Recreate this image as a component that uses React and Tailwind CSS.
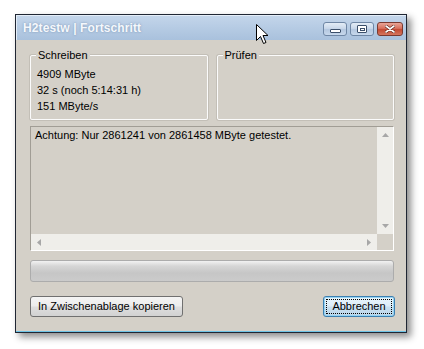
import React from 'react';

const font = { fontFamily: '"Liberation Sans", Arial, sans-serif' };

const TitleButton = ({ kind }) => {
  if (kind === 'close') {
    return (
      <div className="flex h-[14px] w-[26px] items-center justify-center rounded-[3px] border border-[#7a3a30] bg-[linear-gradient(#e9a597_0%,#d7705d_45%,#c34a33_55%,#d5765f_100%)]">
        <svg width="10" height="8" viewBox="0 0 10 8">
          <path d="M1 1 L9 7 M9 1 L1 7" stroke="#5b2218" strokeWidth="3" strokeLinecap="round" />
          <path d="M1 1 L9 7 M9 1 L1 7" stroke="#ffffff" strokeWidth="1.6" strokeLinecap="round" />
        </svg>
      </div>
    );
  }
  return (
    <div className="flex h-[14px] w-[24px] items-center justify-center rounded-[3px] border border-[#6f87a5] bg-[linear-gradient(#e3ecf6_0%,#c9d8ea_45%,#b4c8e0_55%,#c7d8ec_100%)]">
      {kind === 'min' ? (
        <div className="mt-[3px] h-[4px] w-[11px] rounded-[1px] border border-[#3b4f6a] bg-white" />
      ) : (
        <div className="flex h-[8px] w-[10px] items-center justify-center rounded-[1px] border border-[#3b4f6a] bg-white">
          <div className="h-[3px] w-[5px] border border-[#3b4f6a]" />
        </div>
      )}
    </div>
  );
};

const GroupBox = ({ label, children }) => (
  <div className="relative h-[65px] rounded-[2px] border border-[#fbfbfb] shadow-[0_0_0_1px_#c3bfb7]">
    <span className="absolute left-[5px] top-[-7px] bg-[#d4d0c8] px-[2px] leading-[13px]">{label}</span>
    <div className="pl-[6px] pt-[10px] leading-[16px]">{children}</div>
  </div>
);

const Arrow = ({ dir }) => {
  const d = {
    up: 'M0 4 L3.5 0 L7 4 Z',
    down: 'M0 0 L7 0 L3.5 4 Z',
    left: 'M4 0 L4 7 L0 3.5 Z',
    right: 'M0 0 L4 3.5 L0 7 Z',
  }[dir];
  const vertical = dir === 'up' || dir === 'down';
  return (
    <svg width={vertical ? 7 : 4} height={vertical ? 4 : 7} viewBox={vertical ? '0 0 7 4' : '0 0 4 7'}>
      <path d={d} fill="#a7a7a7" />
    </svg>
  );
};

export default function App() {
  return (
    <div className="relative h-[349px] w-[424px] overflow-hidden bg-white pl-[15px] pt-[14px] text-[11px] text-black" style={font}>
      <div className="flex h-[319px] w-[392px] flex-col border border-[#1f2633] bg-[#d4d0c8] shadow-[4px_4px_7px_rgba(0,0,0,0.45)]">
        {/* title bar */}
        <div className="flex h-[25px] shrink-0 items-center justify-between border-t border-l border-[#e4edf7] bg-[linear-gradient(#c3d5ea_0%,#b3c9e2_60%,#a9c1dd_100%)] pl-[6px] pr-[3px]">
          <span className="text-[12px] font-bold tracking-[0.1px] text-[#f5f8fc] [text-shadow:0_0_2px_rgba(60,90,130,0.5)]">
            H2testw | Fortschritt
          </span>
          <div className="flex items-center gap-[3px] pt-[2px]">
            <TitleButton kind="min" />
            <TitleButton kind="max" />
            <TitleButton kind="close" />
          </div>
        </div>

        {/* client area */}
        <div className="flex flex-1 flex-col border-b border-[#6ec4e6] pl-[14px] pr-[12px] pt-[15px]">
          <div className="grid grid-cols-2 gap-[9px]">
            <GroupBox label="Schreiben">
              <div>4909 MByte</div>
              <div>32 s (noch 5:14:31 h)</div>
              <div>151 MByte/s</div>
            </GroupBox>
            <GroupBox label="Prüfen" />
          </div>

          <div className="mt-[6px] grid h-[125px] grid-cols-[1fr_16px] grid-rows-[1fr_16px] border border-t-[#a19d95] border-l-[#a19d95] border-b-white border-r-white">
            <div className="pl-[4px] pt-[2px] leading-[13px]">Achtung: Nur 2861241 von 2861458 MByte getestet.</div>
            <div className="flex flex-col items-center justify-between bg-[#efeeea] py-[6px]">
              <Arrow dir="up" />
              <Arrow dir="down" />
            </div>
            <div className="flex items-center justify-between bg-[#efeeea] px-[6px]">
              <Arrow dir="left" />
              <Arrow dir="right" />
            </div>
            <div className="bg-[#d4d0c8]" />
          </div>

          <div className="mt-[9px] h-[22px] rounded-[3px] border border-[#acacac] bg-[linear-gradient(#f2f2f2_0%,#d6d6d6_25%,#c6c6c6_60%,#cbcbcb_100%)]" />

          <div className="mt-[14px] flex items-center justify-between">
            <button className="h-[21px] w-[153px] rounded-[3px] border border-[#707070] bg-[linear-gradient(#f4f4f4_0%,#ececec_48%,#dedede_52%,#d2d2d2_100%)] text-[11px] leading-[19px]" style={font}>
              In Zwischenablage kopieren
            </button>
            <button className="mr-[-1px] h-[21px] w-[72px] rounded-[3px] border border-[#3c7fb1] bg-[linear-gradient(#eaf6fd_0%,#dcecf7_48%,#c9e0f0_52%,#bcd6ea_100%)] text-[11px] leading-[19px] shadow-[inset_0_0_0_1px_#94d3f3] outline-1 outline-dotted outline-black outline-offset-[-4px]" style={font}>
              Abbrechen
            </button>
          </div>
        </div>
      </div>

      {/* mouse cursor */}
      <svg className="absolute left-[256px] top-[24px]" width="13" height="21" viewBox="0 0 13 21">
        <path d="M0.5 0.5 L0.5 16.5 L4.5 12.5 L7.5 19.5 L10 18.5 L7 11.5 L12 11.5 Z" fill="#ffffff" stroke="#000000" strokeWidth="1" strokeLinejoin="miter" />
      </svg>
    </div>
  );
}
